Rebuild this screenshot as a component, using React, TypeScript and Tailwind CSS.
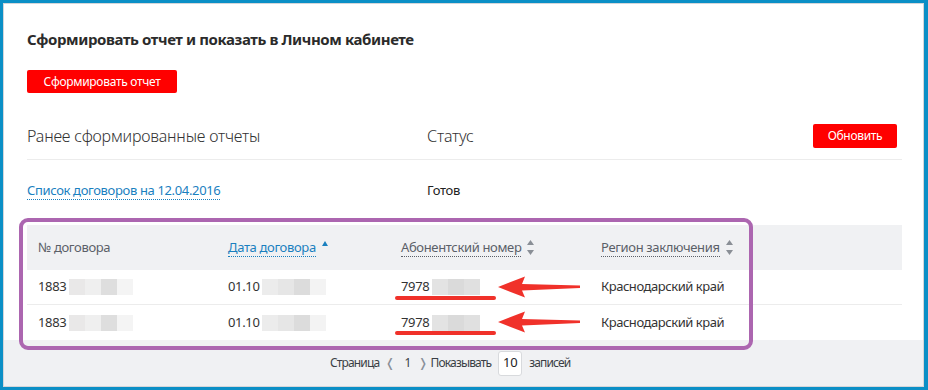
import React from "react";

const font = { fontFamily: '"Noto Sans", "Open Sans", sans-serif' };

function Blur({ tiles }: { tiles: string[] }) {
  return (
    <span className="inline-flex h-[16px] align-middle ml-[3px]">
      {tiles.map((c, i) => (
        <span key={i} className="h-full w-[16px]" style={{ background: c }} />
      ))}
    </span>
  );
}

function UpDown() {
  return (
    <svg width="7" height="15" viewBox="0 0 7 15" className="ml-[6px] shrink-0">
      <polygon points="3.5,0 7,5 0,5" fill="#8a8f96" />
      <polygon points="3.5,15 7,10 0,10" fill="#8a8f96" />
    </svg>
  );
}

function Arrow({ top }: { top: number }) {
  return (
    <svg
      className="absolute left-[494px]"
      style={{ top }}
      width="90"
      height="22"
      viewBox="0 0 90 22"
    >
      <polygon
        points="4,11 31,0.5 28,8 86,9.5 86,12 28,14.5 31,21.5"
        fill="#f0312a"
      />
    </svg>
  );
}

export default function App() {
  return (
    <div
      className="w-[928px] h-[390px] bg-[#0b8fc6] pt-[3px] pl-[3px] pr-[4px] pb-[3px] overflow-hidden relative"
      style={font}
    >
      <div className="h-full border border-[#d4d6d9] bg-white flex flex-col">
        <div className="px-[23px] pr-[21px] pt-[23px] text-[#333]">
          <div className="text-[15px] font-bold leading-[24px] tracking-[-0.4px] text-[#2b2b2b]">
            Сформировать отчет и показать в Личном кабинете
          </div>
          <div className="mt-[17px]">
            <button className="h-[23px] w-[150px] rounded-[2px] bg-[#ff0000] text-white text-[12px] tracking-[-0.3px] leading-[23px]">
              Сформировать отчет
            </button>
          </div>
          <div className="mt-[31px] flex items-center border-b border-[#ececec] pb-[11px] pr-[5px]">
            <div className="w-[400px] text-[16px] font-light leading-[24px] tracking-[-0.2px]">
              Ранее сформированные отчеты
            </div>
            <div className="flex-1 text-[16px] font-light leading-[24px] tracking-[-0.2px]">Статус</div>
            <button className="h-[24px] w-[84px] rounded-[2px] bg-[#ff0000] text-white text-[12px] tracking-[-0.3px]">
              Обновить
            </button>
          </div>
          <div className="flex h-[65px] items-center text-[13px] tracking-[-0.35px] pb-[3px]">
            <div className="w-[400px]">
              <span className="text-[#1a80bf] border-b border-dotted border-[#1a80bf]">
                Список договоров на 12.04.2016
              </span>
            </div>
            <div className="text-[#222]">Готов</div>
          </div>
          <div className="text-[13px] tracking-[-0.35px]">
            <div className="flex h-[45px] items-center bg-[#f0f1f3] text-[#5b6068]">
              <div className="w-[201px] pl-[11px]">№ договора</div>
              <div className="w-[173px] flex items-center">
                <span className="text-[#1a80bf] border-b border-dotted border-[#1a80bf] leading-[18px]">
                  Дата договора
                </span>
                <svg width="6" height="5" viewBox="0 0 6 5" className="ml-[6px] -mt-[8px]">
                  <polygon points="3,0 6,5 0,5" fill="#1a80bf" />
                </svg>
              </div>
              <div className="w-[200px] flex items-center">
                <span className="border-b border-dotted border-[#5b6068] leading-[18px]">
                  Абонентский номер
                </span>
                <UpDown />
              </div>
              <div className="flex items-center">
                <span className="border-b border-dotted border-[#5b6068] leading-[18px]">
                  Регион заключения
                </span>
                <UpDown />
              </div>
            </div>
            {[0, 1].map((r) => (
              <div
                key={r}
                className={`flex h-[35px] items-center text-[#333] ${r === 0 ? "border-b border-[#ececec]" : ""}`}
              >
                <div className="w-[201px] pl-[11px] flex items-center">
                  1883
                  <Blur tiles={["#e9e8e8", "#efefef", "#dedede", "#f4f4f4"]} />
                </div>
                <div className="w-[173px] flex items-center">
                  01.10
                  <Blur tiles={["#ececec", "#e6e6e6", "#dcdcdc", "#f3f3f3"]} />
                </div>
                <div className="w-[200px] flex items-center">
                  7978
                  <Blur tiles={["#e3e3e3", "#dadada", "#e0e0e0"]} />
                </div>
                <div className="tracking-[-0.45px]">Краснодарский край</div>
              </div>
            ))}
          </div>
        </div>
        <div className="flex-1 bg-[#f0f1f3] flex items-center pl-[326px] text-[12px] tracking-[-0.85px] text-[#3a3f45]">
          <span>Страница</span>
          <span className="ml-[6px] text-[#8a9099]">❬</span>
          <span className="ml-[10px]">1</span>
          <span className="ml-[8px] text-[#8a9099]">❭</span>
          <span className="ml-[3px]">Показывать</span>
          <span className="ml-[7px] flex h-[25px] w-[24px] items-center justify-center rounded-[3px] border border-[#d8dadd] bg-white text-[#222] text-[13px] tracking-[-0.3px]">
            10
          </span>
          <span className="ml-[7px]">записей</span>
        </div>
      </div>

      {/* annotations */}
      <div className="absolute left-[19px] top-[218px] h-[132px] w-[734px] rounded-[9px] border-[4px] border-[#ac66b0]" />
      <div className="absolute left-[395px] top-[296px] h-[4px] w-[101px] rounded-full bg-[#f0312a]" />
      <div className="absolute left-[395px] top-[331px] h-[4px] w-[101px] rounded-full bg-[#f0312a]" />
      <Arrow top={276} />
      <Arrow top={311} />
    </div>
  );
}
